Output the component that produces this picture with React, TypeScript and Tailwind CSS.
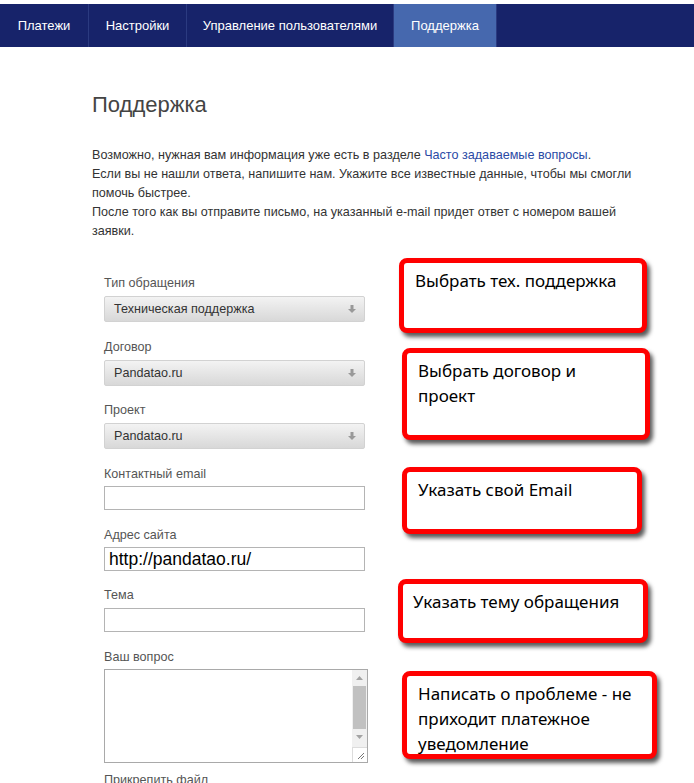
import React from "react";

const Arrow = () => (
  <svg width="10" height="10" viewBox="0 0 10 10" className="shrink-0">
    <path d="M3.5 1h3v4h2.5L5 9 1 5h2.5z" fill="#999" />
  </svg>
);

function Select({ value }: { value: string }) {
  return (
    <div className="flex h-[26px] w-[261px] items-center justify-between rounded-[2px] border border-[#d2d2d2] bg-gradient-to-b from-[#f3f3f3] to-[#d8d8d8] pl-[9px] pr-[7px] text-[12.6px] text-[#333]">
      <span>{value}</span>
      <Arrow />
    </div>
  );
}

function Label({ children, className = "" }: { children: React.ReactNode; className?: string }) {
  return <div className={`h-4 text-[12.6px] leading-4 text-[#555] ${className}`}>{children}</div>;
}

function Input({ value }: { value?: string }) {
  return (
    <div className="flex h-[24px] w-[261px] items-center border border-[#b4b4b4] bg-white pl-[4px] text-[17.5px] leading-[20px] text-black">
      {value}
    </div>
  );
}

function Callout({
  className,
  lines,
}: {
  className: string;
  lines: string[];
}) {
  return (
    <div
      className={`absolute rounded-[8px] border-[5px] border-[#ff0000] bg-white pl-[11px] pt-[5px] text-[17px] leading-[25px] text-black shadow-[3px_4px_4px_rgba(0,0,0,0.65)] ${className}`}
      style={{ fontFamily: '"Noto Sans", "Open Sans", sans-serif' }}
    >
      {lines.map((l, i) => (
        <div key={i}>{l}</div>
      ))}
    </div>
  );
}

export default function App() {
  const nav = [
    { t: "Платежи", w: "w-[89px]" },
    { t: "Настройки", w: "w-[98px]" },
    { t: "Управление пользователями", w: "w-[207px]" },
    { t: "Поддержка", w: "w-[103px]", active: true },
  ];
  return (
    <div
      className="relative h-[783px] w-[694px] overflow-hidden bg-white"
      style={{ fontFamily: '"Liberation Sans", Arial, sans-serif' }}
    >
      <div className="h-[4px]" />
      <nav className="flex h-[43px] bg-[#17236a]">
        {nav.map((n) => (
          <div
            key={n.t}
            className={`flex h-full items-center justify-center border-r border-[#2b3a80] text-[13px] text-white ${n.w} ${
              n.active ? "bg-[#4668ae]" : ""
            }`}
          >
            {n.t}
          </div>
        ))}
      </nav>

      <main className="pl-[92px] pt-[45px]">
        <h1 className="text-[22px] leading-[26px] font-normal text-[#444]">Поддержка</h1>
        <div className="mt-[28px] w-[545px] text-[12.6px] leading-[19px] text-[#333]">
          <p>
            Возможно, нужная вам информация уже есть в разделе{" "}
            <span className="text-[#2a4aa5]">Часто задаваемые вопросы</span>.
          </p>
          <p>
            Если вы не нашли ответа, напишите нам. Укажите все известные данные, чтобы мы смогли помочь
            быстрее.
          </p>
          <p>После того как вы отправите письмо, на указанный e-mail придет ответ с номером вашей заявки.</p>
        </div>

        <div className="ml-[12px] mt-[34px] flex flex-col">
          <Label className="mb-[5px]">Тип обращения</Label>
          <Select value="Техническая поддержка" />

          <Label className="mb-[5px] mt-[17px]">Договор</Label>
          <Select value="Pandatao.ru" />

          <Label className="mb-[5px] mt-[16px]">Проект</Label>
          <Select value="Pandatao.ru" />

          <Label className="mb-[4px] mt-[17px]">Контактный email</Label>
          <Input />

          <Label className="mb-[4px] mt-[17px]">Адрес сайта</Label>
          <Input value="http://pandatao.ru/" />

          <Label className="mb-[5px] mt-[16px]">Тема</Label>
          <Input />

          <Label className="mb-[4px] mt-[17px]">Ваш вопрос</Label>
          <div className="flex h-[94px] w-[264px] border border-[#a9a9a9] bg-white">
            <div className="flex-1" />
            <div className="flex w-[15px] flex-col bg-[#f0f0f0]">
              <div className="flex h-[16px] items-center justify-center">
                <svg width="7" height="4" viewBox="0 0 7 4">
                  <path d="M0 4L3.5 0 7 4z" fill="#a3a3a3" />
                </svg>
              </div>
              <div className="mx-[1px] h-[43px] bg-[#c1c1c1]" />
              <div className="flex h-[16px] items-center justify-center">
                <svg width="7" height="4" viewBox="0 0 7 4">
                  <path d="M0 0L3.5 4 7 0z" fill="#a3a3a3" />
                </svg>
              </div>
              <div className="flex-1" />
              <div className="flex h-[15px] items-end justify-end border-l border-t border-[#dcdcdc] bg-white p-[2px]">
                <svg width="8" height="8" viewBox="0 0 8 8">
                  <path d="M7 1L1 7M7 4L4 7" stroke="#777" strokeWidth="1" />
                </svg>
              </div>
            </div>
          </div>

          <Label className="mt-[9px]">Прикрепить файл</Label>
        </div>
      </main>

      <Callout className="left-[399px] top-[258px] h-[75px] w-[248px]" lines={["Выбрать тех. поддержка"]} />
      <Callout
        className="left-[402px] top-[348px] h-[92px] w-[248px]"
        lines={["Выбрать договор и", "проект"]}
      />
      <Callout className="left-[402px] top-[467px] h-[67px] w-[240px]" lines={["Указать свой Email"]} />
      <Callout className="left-[398px] top-[579px] h-[64px] w-[250px] !pl-[10px]" lines={["Указать тему обращения"]} />
      <Callout
        className="left-[402px] top-[671px] h-[88px] w-[255px]"
        lines={["Написать о проблеме - не", "приходит платежное", "уведомление"]}
      />
    </div>
  );
}
